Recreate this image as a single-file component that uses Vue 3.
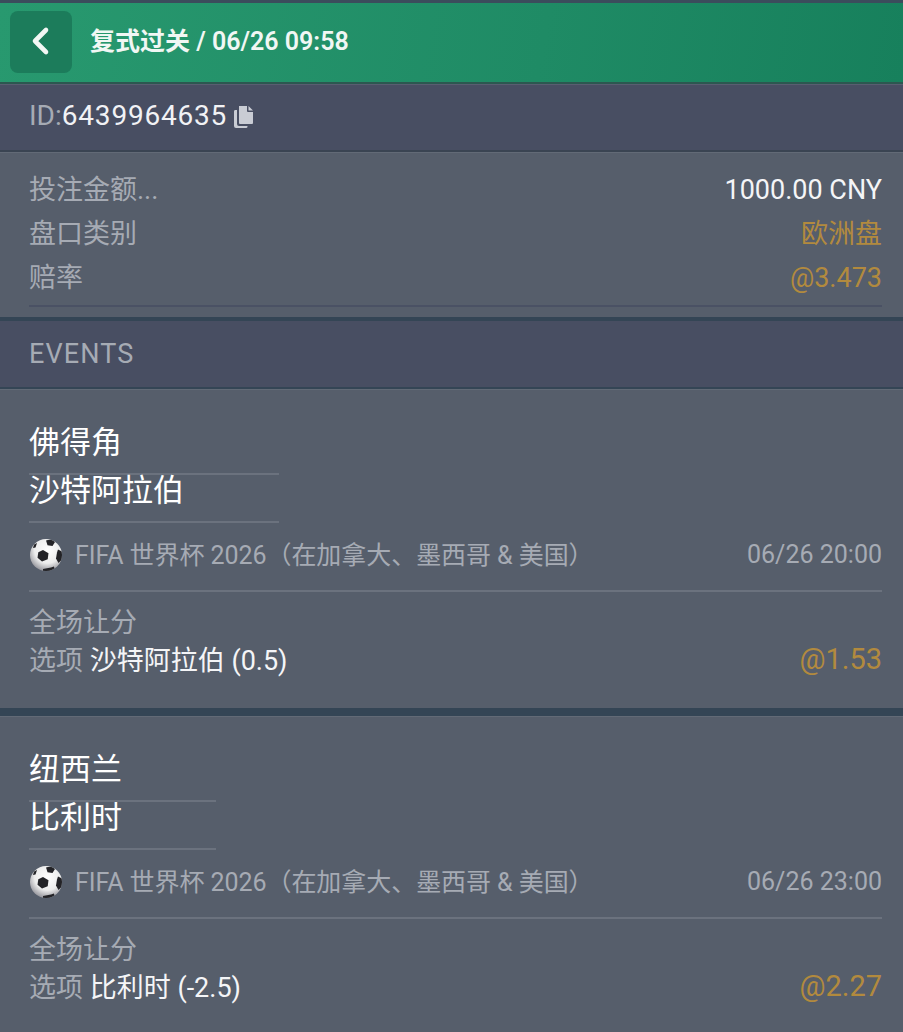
<script setup>
const summary = [
  { label: '投注金额...', value: '1000.00 CNY', cls: 'white' },
  { label: '盘口类别', value: '欧洲盘', cls: 'gold' },
  { label: '赔率', value: '@3.473', cls: 'gold' },
]
const events = [
  { a: '佛得角', b: '沙特阿拉伯', time: '06/26 20:00', pick: '沙特阿拉伯 (0.5)', odds: '@1.53', width: 250 },
  { a: '纽西兰', b: '比利时', time: '06/26 23:00', pick: '比利时 (-2.5)', odds: '@2.27', width: 187 },
]
</script>

<template>
  <div class="page">
    <header class="head">
      <button class="back" aria-label="back">
        <svg width="20" height="30" viewBox="0 0 20 30"><path d="M16 4 5 15l11 11" fill="none" stroke="#f2f7f4" stroke-width="4.600" stroke-linecap="round" stroke-linejoin="round"/></svg>
      </button>
      <span class="title">复式过关 / 06/26 09:58</span>
    </header>
    <section class="idbar">
      <span class="dim">ID:</span><span class="idnum">6439964635</span>
      <svg class="copy" width="22" height="24" viewBox="0 0 22 24">
        <path d="M7 1h8v5a1 1 0 0 0 1 1h5v11a1 1 0 0 1-1 1H8a1 1 0 0 1-1-1z" fill="#c9ccd4"/>
        <path d="M16.500 1 21 5.500h-4.500z" fill="#c9ccd4"/>
        <path d="M5 5H3a1.500 1.500 0 0 0-1 1.500V21a2 2 0 0 0 2 2h10a1.500 1.500 0 0 0 1.500-1.500V21H7a2 2 0 0 1-2-2z" fill="#c9ccd4"/>
      </svg>
    </section>
    <section class="summary">
      <div class="rows">
        <div v-for="r in summary" :key="r.label" class="row">
          <span class="dim">{{ r.label }}</span>
          <span :class="r.cls">{{ r.value }}</span>
        </div>
      </div>
    </section>
    <section class="events-head">EVENTS</section>
    <template v-for="(e, i) in events" :key="e.a">
      <section class="event">
        <div class="team" :style="{ width: e.width + 'px' }">{{ e.a }}</div>
        <div class="team" :style="{ width: e.width + 'px' }">{{ e.b }}</div>
        <div class="league">
          <svg class="ball" width="34" height="34" viewBox="0 0 34 34">
            <defs>
              <radialGradient id="bg" cx="55%" cy="35%" r="68%">
                <stop offset="0" stop-color="#ffffff"/>
                <stop offset="0.6" stop-color="#ececec"/>
                <stop offset="1" stop-color="#8e8e95"/>
              </radialGradient>
              <clipPath id="bc"><circle cx="17" cy="17" r="16"/></clipPath>
            </defs>
            <circle cx="17" cy="17" r="16" fill="url(#bg)"/>
            <g clip-path="url(#bc)" fill="#232327">
              <path d="M14 12l5.500 3.200-.8 6L13 23.500 8.500 19.800l.8-5.500z"/>
              <path d="M17 2.500 23 1l3 3-2.500 4-5-.8z"/>
              <path d="M29 11.500l4 2v8l-3.500 3.500-2.500-4.500 1-6z"/>
              <path d="M14 31l8-1.500 3-1 .5 2.500L19 34l-5-.5z"/>
              <path d="M5 6.500 8 5 6.500 9.500 4 10z"/>
            </g>
          </svg>
          <span class="league-name">FIFA 世界杯 2026（在加拿大、墨西哥 &amp; 美国）</span>
          <span class="time">{{ e.time }}</span>
        </div>
        <div class="market">全场让分</div>
        <div class="pick">
          <span><span class="dim">选项</span> <span class="white">{{ e.pick }}</span></span>
          <span class="odds">{{ e.odds }}</span>
        </div>
      </section>
      <div v-if="i === 0" class="sep"></div>
    </template>
  </div>
</template>

<style>
html, body { margin: 0; padding: 0; background: #565e6b; }
</style>

<style scoped>
.page {
  width: 903px;
  height: 1032px;
  overflow: hidden;
  background: #565e6b;
  font-family: Roboto, "Noto Sans CJK SC", sans-serif;
  font-size: 27px;
  color: #fff;
}
.head {
  box-sizing: border-box;
  height: 84px;
  display: flex;
  align-items: center;
  gap: 18px;
  padding: 0 0 1px 10px;
  background: linear-gradient(100deg, #28996f 0%, #1f8b65 60%, #17805c 100%);
  border-top: 3px solid #3b4c5c;
  border-bottom: 2px solid #2c5750;
}
.back {
  width: 62px;
  height: 62px;
  padding: 0;
  display: flex;
  align-items: center;
  justify-content: center;
  border: 0;
  border-radius: 8px;
  background: #1c7c5b;
}
.back svg { margin-right: 2px; margin-bottom: 2px; }
.title {
  font-size: 25px;
  font-weight: 600;
  color: #f1f7f4;
  line-height: 1;
  margin-top: -1px;
}
.idbar {
  box-sizing: border-box;
  height: 68px;
  display: flex;
  align-items: center;
  padding: 0 0 4px 29px;
  font-size: 28px;
  background: #484e62;
  border-top: 1px solid #585e70;
  border-bottom: 2px solid #3a4452;
}
.idnum { color: #f1f2f5; letter-spacing: 0.8px; }
.copy { margin-left: 5px; margin-top: 2px; }
.dim { color: #a6abb4; }
.white { color: #f4f5f7; }
.gold { color: #b28a3e; }
.summary {
  box-sizing: border-box;
  height: 165px;
  padding: 15px 21px 0 29px;
  background: #565e6b;
  border-top: 1px solid #626a76;
}
.rows { border-bottom: 2px solid #4a5164; padding-bottom: 5px; }
.row {
  display: flex;
  justify-content: space-between;
  height: 44px;
  line-height: 44px;
}
.events-head {
  box-sizing: border-box;
  height: 72px;
  display: flex;
  align-items: center;
  padding: 0 0 1px 29px;
  color: #a6abb4;
  letter-spacing: 1.1px;
  background: #484e62;
  border-top: 4px solid #344555;
  border-bottom: 2px solid #344555;
}
.event {
  box-sizing: border-box;
  height: 319px;
  padding: 37px 21px 0 29px;
  background: #565e6b;
  border-top: 1px solid #626a76;
}
.team {
  box-sizing: border-box;
  height: 48px;
  line-height: 32px;
  font-size: 31px;
  color: #fff;
  border-bottom: 2px solid #6b727e;
  white-space: nowrap;
}
.league {
  display: flex;
  align-items: center;
  height: 69px;
  padding-bottom: 4px;
  border-bottom: 2px solid #6b727e;
  box-sizing: border-box;
}
.ball { flex: none; margin-right: 12px; }
.league-name { flex: 1; font-size: 25px; letter-spacing: -0.06px; color: #a6abb4; white-space: nowrap; margin-top: -3px; }
.time { font-size: 25px; color: #a6abb4; }
.market {
  height: 39px;
  line-height: 38px;
  margin-top: 12px;
  color: #a6abb4;
}
.pick {
  display: flex;
  justify-content: space-between;
  height: 36px;
  line-height: 36px;
}
.odds { color: #b28a3e; font-size: 29px; margin-top: -2px; }
.sep {
  height: 8px;
  background: #344555;
}
</style>
